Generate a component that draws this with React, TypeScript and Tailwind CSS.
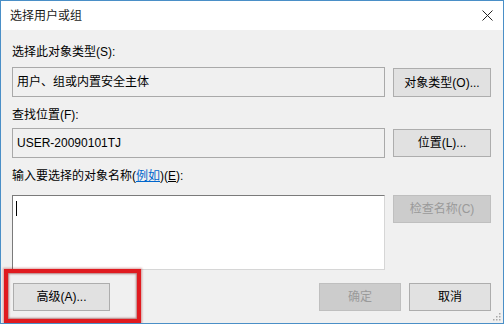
import React from 'react'

const font = { fontFamily: '"Liberation Sans", "Noto Sans CJK SC", sans-serif' }

function Btn({ children, disabled, className = '' }: { children: React.ReactNode; disabled?: boolean; className?: string }) {
  return (
    <button
      type="button"
      disabled={disabled}
      className={
        'flex items-center justify-center border text-[12px] leading-none ' +
        (disabled ? 'bg-[#cccccc] border-[#bfbfbf] text-[#9a9a9a] ' : 'bg-[#e1e1e1] border-[#adadad] text-black ') +
        className
      }
    >
      {children}
    </button>
  )
}

export default function App() {
  return (
    <div style={font} className="relative w-[504px] h-[324px] border border-[#4a8fc7] bg-[#f0f0f0] flex flex-col text-[12px] text-black overflow-hidden">
      {/* Title bar */}
      <div className="h-[29px] bg-white flex items-center justify-between pl-[9px] pr-[9px] shrink-0">
        <span className="text-[12px] text-[#1a1a1a]">选择用户或组</span>
        <svg width="11" height="11" viewBox="0 0 11 11" className="mr-[1px]">
          <path d="M0.5 0.5L10.5 10.5M10.5 0.5L0.5 10.5" stroke="#222" strokeWidth="1" />
        </svg>
      </div>

      {/* Body */}
      <div className="flex-1 flex flex-col pl-[11px] pr-[12px]">
        <div className="h-[16px] leading-[16px] mt-[14px]">选择此对象类型(S):</div>
        <div className="flex items-start mt-[7px]">
          <div className="w-[373px] h-[30px] border border-[#a9a9a9] bg-[#f0f0f0] flex items-center pl-[4px]">
            用户、组或内置安全主体
          </div>
          <Btn className="ml-[8px] mt-[1px] w-[98px] h-[29px]">对象类型(O)...</Btn>
        </div>

        <div className="h-[16px] leading-[16px] mt-[10px]">查找位置(F):</div>
        <div className="flex items-start mt-[5px]">
          <div className="w-[373px] h-[30px] border border-[#a9a9a9] bg-[#f0f0f0] flex items-center pl-[4px]">
            USER-20090101TJ
          </div>
          <Btn className="ml-[8px] mt-[1px] w-[98px] h-[28px]">位置(L)...</Btn>
        </div>

        <div className="h-[16px] leading-[16px] mt-[10px]">
          输入要选择的对象名称(<span className="text-[#0066cc] underline">例如</span>)(<span className="underline">E</span>):
        </div>
        <div className="flex items-start mt-[11px]">
          <div className="w-[373px] h-[75px] bg-white border-t border-l border-[#7a7a7a] border-r-[#d6d6d6] border-b-[#d6d6d6] border-r border-b pl-[3px] pt-[5px]">
            <div className="w-px h-[15px] bg-black" />
          </div>
          <Btn disabled className="ml-[8px] w-[98px] h-[28px]">检查名称(C)</Btn>
        </div>

        <div className="flex items-start mt-[13px] pl-[1px]">
          <Btn className="w-[97px] h-[28px]">高级(A)...</Btn>
          <div className="flex-1" />
          <Btn disabled className="w-[82px] h-[28px]">确定</Btn>
          <Btn className="ml-[8px] w-[82px] h-[28px]">取消</Btn>
        </div>
      </div>

      {/* resize grip */}
      <svg width="8" height="8" viewBox="0 0 8 8" className="absolute right-[2px] bottom-[2px]">
        <rect x="6" y="0" width="1.5" height="1.5" fill="#a8a8a8" />
        <rect x="3" y="3" width="1.5" height="1.5" fill="#a8a8a8" />
        <rect x="6" y="3" width="1.5" height="1.5" fill="#a8a8a8" />
        <rect x="0" y="6" width="1.5" height="1.5" fill="#a8a8a8" />
        <rect x="3" y="6" width="1.5" height="1.5" fill="#a8a8a8" />
        <rect x="6" y="6" width="1.5" height="1.5" fill="#a8a8a8" />
      </svg>

      {/* red highlight annotation */}
      <div className="absolute left-[3px] top-[268px] w-[137px] h-[54px] border-[4px] border-[#e01a1f] shadow-[inset_0_0_2px_1px_rgba(120,0,0,0.5),0_0_2px_1px_rgba(150,0,0,0.35)] pointer-events-none" />
    </div>
  )
}
